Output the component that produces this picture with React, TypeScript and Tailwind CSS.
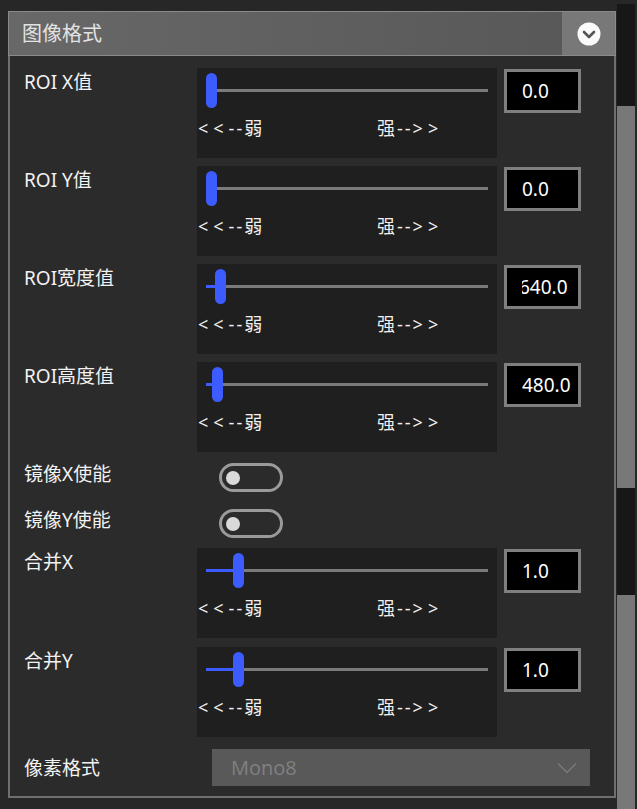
import React from 'react'

const FONT = { fontFamily: '"Noto Sans", "Noto Sans CJK SC", sans-serif' }

type SliderRow = {
  label: string
  thumb: number
  value: string
  shift?: number
}

function Slider({ thumb }: { thumb: number }) {
  return (
    <div className="relative h-[90px] w-[300px] bg-[#1f1f1f]">
      <div className="absolute left-[9px] top-[21px] h-[3px] w-[282px] bg-[#7a7a7a]" />
      <div
        className="absolute left-[9px] top-[21px] h-[3px] bg-[#3d5cff]"
        style={{ width: thumb }}
      />
      <div
        className="absolute top-[5px] h-[35px] w-[11px] rounded-full bg-[#3d5cff]"
        style={{ left: 9 + thumb }}
      />
      <div className="absolute left-[1px] top-[47px] text-[18px] leading-[26px] text-[#f0f0f0]">
        <span className="tracking-[5px]">{'<<'}</span>
        <span className="tracking-[2px]">{'--'}</span>弱
      </div>
      <div className="absolute left-[180px] top-[47px] text-[18px] leading-[26px] text-[#f0f0f0]">
        <span className="tracking-[2px]">强--</span>
        <span className="tracking-[5px]">{'>>'}</span>
      </div>
    </div>
  )
}

function ValueBox({ value, shift = 0 }: { value: string; shift?: number }) {
  return (
    <div className="mt-[1px] flex h-[44px] w-[77px] items-center border-[3px] border-[#7f7f7f] bg-black pl-[15px]">
      <div className="flex-1 overflow-hidden">
        <div
          className="whitespace-nowrap text-[19px] leading-none text-white"
          style={{ marginLeft: shift }}
        >
          {value}
        </div>
      </div>
    </div>
  )
}

function SliderLine({ row, mt }: { row: SliderRow; mt: string }) {
  return (
    <div className={`flex ${mt}`}>
      <div className="mt-[1px] w-[173px] text-[19px] leading-[26px] text-[#f2f2f2]">{row.label}</div>
      <Slider thumb={row.thumb} />
      <div className="ml-[7px]">
        <ValueBox value={row.value} shift={row.shift} />
      </div>
    </div>
  )
}

function Toggle({ label, mt }: { label: string; mt: string }) {
  return (
    <div className={`flex ${mt}`}>
      <div className="-mt-[2px] w-[195px] text-[19px] leading-[26px] text-[#f2f2f2]">{label}</div>
      <div className="flex h-[29px] w-[64px] items-center rounded-full border-[3px] border-[#9a9a9a] pl-[4px]">
        <div className="h-[14px] w-[14px] rounded-full bg-[#d9d9d9]" />
      </div>
    </div>
  )
}

export default function App() {
  const top: SliderRow[] = [
    { label: 'ROI X值', thumb: 0, value: '0.0' },
    { label: 'ROI Y值', thumb: 0, value: '0.0' },
    { label: 'ROI宽度值', thumb: 9, value: '640.0', shift: -3 },
    { label: 'ROI高度值', thumb: 6, value: '480.0' },
  ]

  return (
    <div className="flex h-[809px] w-[637px] overflow-hidden bg-[#272727]" style={FONT}>
      <div className="w-[609px] pl-[8px] pt-[11px]">
        {/* header */}
        <div className="flex h-[45px] w-[608px] border border-[#8a8a8a] bg-gradient-to-r from-[#686868] to-[#575757]">
          <div className="flex flex-1 items-center pl-[13px] text-[20px] text-[#e2e2e2]">图像格式</div>
          <div className="flex w-[53px] items-center justify-center bg-[#787878]">
            <svg width="24" height="24" viewBox="0 0 24 24">
              <circle cx="12" cy="12" r="11.5" fill="#fafafa" />
              <path d="M7 10l5 5 5-5" fill="none" stroke="#555" strokeWidth="2.6" strokeLinecap="round" strokeLinejoin="round" />
            </svg>
          </div>
        </div>

        {/* body */}
        <div className="flex h-[742px] w-[608px] flex-col border-x-2 border-b-2 border-[#6f6f6f] bg-[#2b2b2b] pl-[14px] pt-[12px]">
          {top.map((row, i) => (
            <SliderLine key={row.label} row={row} mt={i === 0 ? 'mt-0' : 'mt-[8px]'} />
          ))}
          <Toggle label="镜像X使能" mt="mt-[11px]" />
          <Toggle label="镜像Y使能" mt="mt-[17px]" />
          <SliderLine row={{ label: '合并X', thumb: 27, value: '1.0' }} mt="mt-[10px]" />
          <SliderLine row={{ label: '合并Y', thumb: 27, value: '1.0' }} mt="mt-[9px]" />
          <div className="mt-[12px] flex items-center">
            <div className="w-[188px] text-[19px] leading-[26px] text-[#f2f2f2]">像素格式</div>
            <div className="flex h-[37px] w-[378px] items-center justify-between bg-[#595959] pl-[19px] pr-[13px]">
              <span className="text-[20px] leading-none text-[#808080]" style={{ fontFamily: '"Open Sans", sans-serif' }}>
                Mono8
              </span>
              <svg width="20" height="12" viewBox="0 0 20 12">
                <path d="M1 1.5l9 9 9-9" fill="none" stroke="#7a7a7a" strokeWidth="1.4" />
              </svg>
            </div>
          </div>
        </div>
      </div>

      {/* scrollbar */}
      <div className="ml-[8px] flex w-[18px] flex-col pt-[4px]">
        <div className="h-[102px] bg-[#171717]" />
        <div className="h-[382px] bg-[#787878]" />
        <div className="h-[107px] bg-[#171717]" />
        <div className="flex-1 bg-[#787878]" />
      </div>
    </div>
  )
}
